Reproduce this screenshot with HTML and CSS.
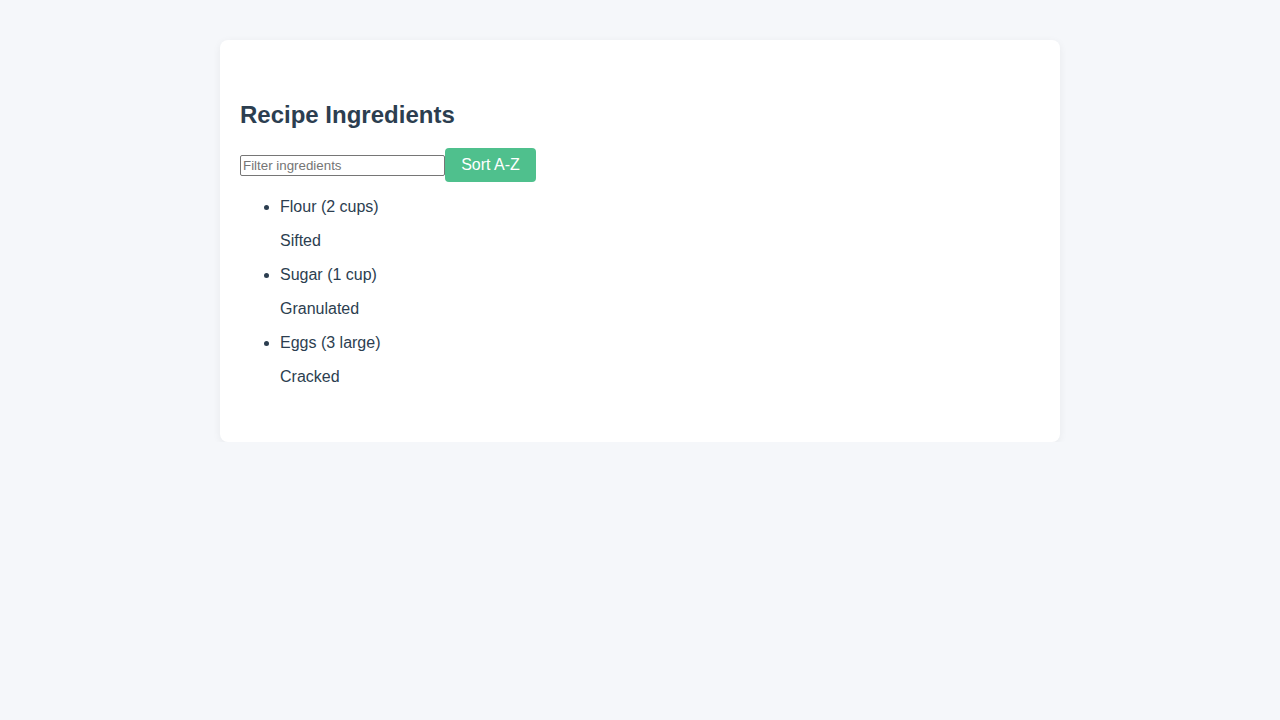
FILE: index.html
```html
<!DOCTYPE html>
<html>
<head>
<meta charset="utf-8">
<link rel="stylesheet" href="styles.css">
</head>
<body>
<div class="card">
  <h2 class="title">Recipe Ingredients</h2>
  <div class="controls">
    <input class="filter" type="text" placeholder="Filter ingredients">
    <button class="sort">Sort A-Z</button>
  </div>
  <ul class="list">
    <li><div class="name">Flour (2 cups)</div><div class="note">Sifted</div></li>
    <li><div class="name">Sugar (1 cup)</div><div class="note">Granulated</div></li>
    <li><div class="name">Eggs (3 large)</div><div class="note">Cracked</div></li>
  </ul>
</div>
</body>
</html>
```
FILE: styles.css
```css
html, body {
  margin: 0;
  padding: 0;
  background: #f5f7fa;
  font-family: "Liberation Sans", Arial, sans-serif;
  color: #2c3e50;
}
body {
  padding-top: 40px;
}
.card {
  width: 840px;
  box-sizing: border-box;
  margin: 0 auto;
  background: #ffffff;
  border-radius: 8px;
  box-shadow: 0 2px 8px rgba(0, 0, 0, 0.06);
  padding: 61px 20px 20px;
}
.title {
  margin: 0;
  font-size: 24px;
  font-weight: bold;
  line-height: 28px;
  color: #2c3e50;
}
.controls {
  display: flex;
  align-items: center;
  margin-top: 19px;
}
.filter {
  box-sizing: border-box;
  width: 205px;
  height: 21px;
  margin: 0;
  padding: 1px 2px;
  border: 1px solid #767676;
  border-radius: 2px;
  font-family: "Liberation Sans", Arial, sans-serif;
  font-size: 13.33px;
  color: #2c3e50;
}
.filter::placeholder {
  color: #757575;
}
.sort {
  box-sizing: border-box;
  height: 34px;
  width: 91px;
  margin: 0;
  padding: 0 16px;
  border: none;
  border-radius: 4px;
  background: #4fc08d;
  color: #ffffff;
  font-family: "Liberation Sans", Arial, sans-serif;
  font-size: 16px;
}
.list {
  margin: 8px 0 28px;
  padding-left: 40px;
  font-size: 16px;
}
.name, .note {
  line-height: 34px;
}
```
